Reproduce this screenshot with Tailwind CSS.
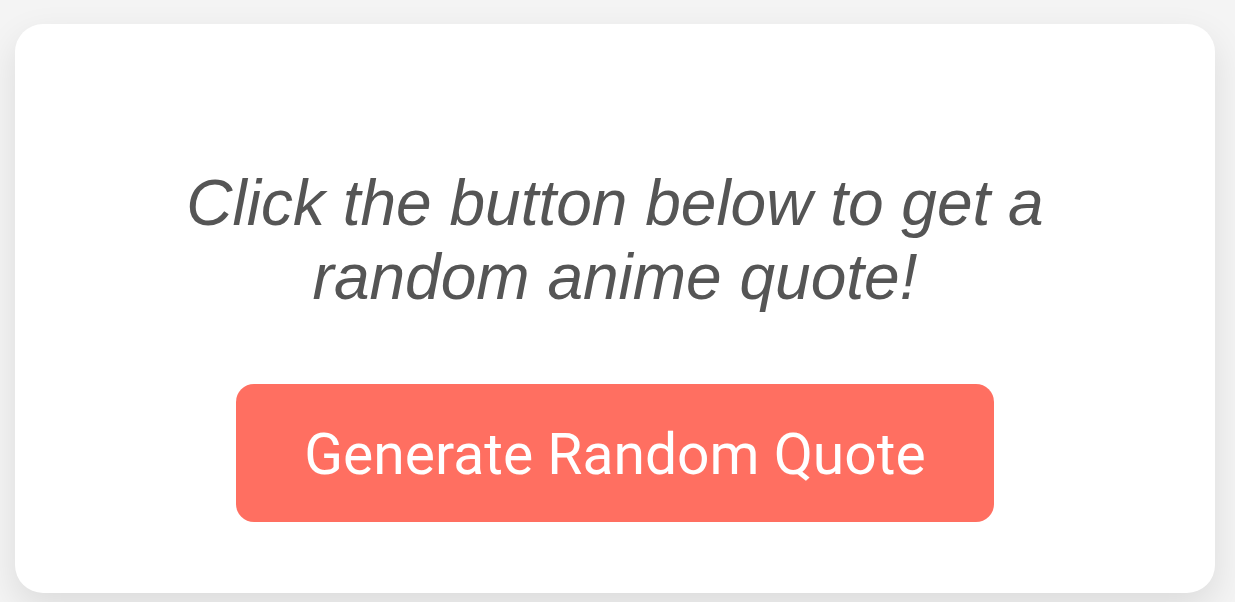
<!DOCTYPE html>
<html lang="en">
<head>
<meta charset="utf-8">
<title>Anime Quote</title>
<script src="https://cdn.jsdelivr.net/npm/@tailwindcss/browser@4"></script>
</head>
<body class="min-h-screen bg-[#f4f4f4] overflow-hidden pt-6 pr-5 pl-[15px]">
<main class="flex flex-col items-center rounded-[28px] bg-white px-6 pt-[142px] pb-[71px] shadow-[0_14px_36px_rgba(0,0,0,0.1)]">
<p class="max-w-[900px] text-center text-[64px] leading-[74px] italic text-[#555] font-['Liberation_Sans',Arial,sans-serif]">Click the button below to get a random anime quote!</p>
<button type="button" class="mt-[70px] rounded-[18px] bg-[#ff6f61] px-[68px] pt-[34px] pb-[30px] text-[57px] leading-[74px] text-white font-[Tahoma,Roboto,sans-serif]">Generate Random Quote</button>
</main>
</body>
</html>
